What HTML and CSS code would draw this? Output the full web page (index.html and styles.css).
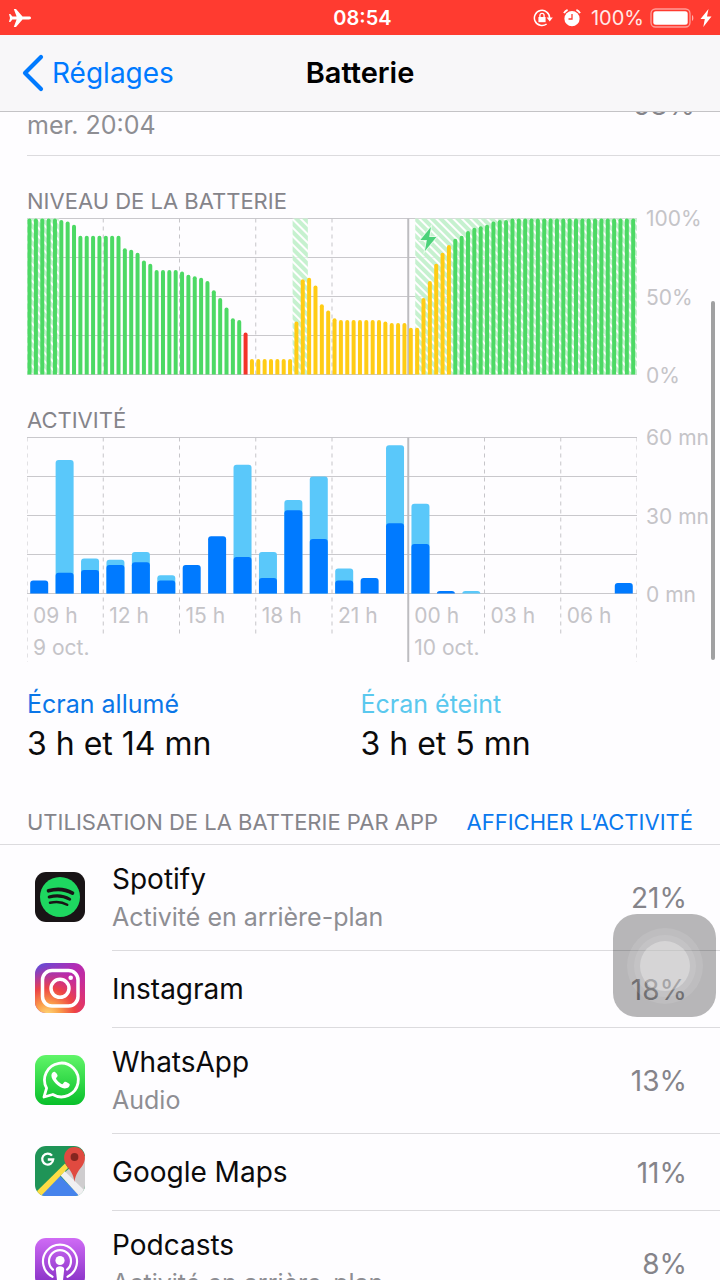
FILE: index.html
```html
<!DOCTYPE html>
<html lang="fr">
<head>
<meta charset="utf-8">
<meta name="viewport" content="width=device-width, initial-scale=1">
<title>Batterie</title>
<link rel="stylesheet" href="styles.css">
</head>
<body>
<div class="screen">
  <div class="status">
    <svg class="plane" width="24" height="20" viewBox="0 0 24 20" aria-label="Mode avion"><path fill="#fff" d="M23 10c0-1-.9-1.400-2-1.400h-6.500L8 1H5.800l2.800 7.600H4.400L2.300 6H1l1 4-1 4h1.300l2.100-2.600h4.200L5.800 19H8l6.500-7.600H21c1.100 0 2-.4 2-1.400z"/></svg>
    <time class="clock">08:54</time>
    <div class="indicators">
      <svg width="20" height="18" viewBox="0 0 20 18" aria-label="Rotation verrouillée"><path d="M13.600 15A7.600 7.600 0 1 1 16.600 9" fill="none" stroke="#fff" stroke-width="1.500"/><path d="M13.600 8.400h6.200l-3.100 4z" fill="#fff"/><path d="M5.400 8h7.200v5.200H5.400z" fill="#fff"/><path d="M6.900 8V6.500a2.100 2.100 0 0 1 4.200 0V8" fill="none" stroke="#fff" stroke-width="1.300"/></svg>
      <svg class="alarm" width="18" height="18" viewBox="0 0 18 18" aria-label="Alarme"><circle cx="9" cy="9.700" r="7.600" fill="#fff"/><path d="M1 4.200A7 7 0 0 1 4.600.9M17 4.200A7 7 0 0 0 13.400.9" stroke="#fff" stroke-width="1.800" fill="none"/><path d="M9 5v5H5.500" fill="none" stroke="#ff3b30" stroke-width="1.300"/></svg>
      <span class="level">100%</span>
      <svg width="44" height="20" viewBox="0 0 44 20" aria-label="Batterie pleine"><rect x="1" y="1" width="39" height="18" rx="4.500" fill="none" stroke="#fff" stroke-opacity=".5" stroke-width="1.300"/><rect x="3.300" y="3.300" width="34.400" height="13.400" rx="2.500" fill="#fff"/><path d="M42 7c1.800.6 1.800 5.400 0 6z" fill="#fff" opacity=".6"/></svg>
      <svg class="bolt" width="12" height="18" viewBox="0 0 12 18" aria-label="En charge"><path d="M8.500 0 .5 10h4.300L3.300 18l8.200-10.600H7z" fill="#fff"/></svg>
    </div>
  </div>

  <header class="nav">
    <a class="back" href="#reglages"><svg width="22" height="38" viewBox="0 0 22 38" aria-hidden="true"><path d="M19 3 3 19l16 16" fill="none" stroke="#007aff" stroke-width="4.200" stroke-linecap="round" stroke-linejoin="round"/></svg>Réglages</a>
    <h1 class="title">Batterie</h1>
  </header>

  <main class="content">
    <div class="last-charge"><span class="when">mer. 20:04</span><span class="pct">68%</span></div>

    <section class="chart">
      <h2 class="heading">NIVEAU DE LA BATTERIE</h2>
      <div class="chart-body">
        <svg class="plot" id="battery" role="img" aria-label="Niveau de la batterie"></svg>
        <div class="scale"><span>100%</span><span>50%</span><span>0%</span></div>
      </div>
    </section>

    <section class="chart">
      <h2 class="heading">ACTIVITÉ</h2>
      <div class="chart-body">
        <svg class="plot plot-tall" id="activity" role="img" aria-label="Activité"></svg>
        <div class="scale"><span>60 mn</span><span>30 mn</span><span>0 mn</span></div>
        <div class="hours">
          <span>09 h</span><span>12 h</span><span>15 h</span><span>18 h</span><span>21 h</span><span>00 h</span><span>03 h</span><span>06 h</span>
          <span class="day">9 oct.</span><span class="day next">10 oct.</span>
        </div>
      </div>
    </section>

    <dl class="totals">
      <div><dt class="on">Écran allumé</dt><dd>3 h et 14 mn</dd></div>
      <div><dt class="off">Écran éteint</dt><dd>3 h et 5 mn</dd></div>
    </dl>

    <section>
      <div class="list-head"><h2 class="heading">UTILISATION DE LA BATTERIE PAR APP</h2><button class="toggle" type="button">AFFICHER L’ACTIVITÉ</button></div>
      <ul class="apps">
        <li class="app">
          <svg class="icon" viewBox="0 0 50 50" aria-hidden="true"><rect width="50" height="50" rx="11" fill="#191416"/><circle cx="25" cy="25" r="20" fill="#1ed760"/><g fill="none" stroke="#191416" stroke-linecap="round"><path d="M13.500 18.800c8-2.300 17-1.600 24 2.300" stroke-width="3.600"/><path d="M14.200 25c7-1.900 14.700-1.100 20.500 2.200" stroke-width="3"/><path d="M15 30.800c6-1.500 12.500-.8 17.200 2" stroke-width="2.500"/></g></svg>
          <div class="info"><div><p class="name">Spotify</p><p class="note">Activité en arrière-plan</p></div><span class="pct">21%</span></div>
        </li>
        <li class="app">
          <svg class="icon" viewBox="0 0 50 50" aria-hidden="true"><defs><linearGradient id="ig1" x1="0" y1="0" x2="1" y2="1"><stop offset="0" stop-color="#5b51d8"/><stop offset=".45" stop-color="#b52ab4"/><stop offset="1" stop-color="#e0306e"/></linearGradient><radialGradient id="ig2" cx=".25" cy="1.050" r="1"><stop offset="0" stop-color="#ffdc7a"/><stop offset=".25" stop-color="#fba04a"/><stop offset=".55" stop-color="#f0453f" stop-opacity=".95"/><stop offset="1" stop-color="#d62a8c" stop-opacity="0"/></radialGradient></defs><rect width="50" height="50" rx="11" fill="url(#ig1)"/><rect width="50" height="50" rx="11" fill="url(#ig2)"/><g fill="none" stroke="#fff" stroke-width="3.500"><rect x="7.500" y="7.500" width="35.500" height="35.500" rx="9.500"/><circle cx="25" cy="25.300" r="9"/></g><circle cx="35.700" cy="14.700" r="2.300" fill="#fff"/></svg>
          <div class="info"><p class="name">Instagram</p><span class="pct">18%</span></div>
        </li>
        <li class="app">
          <svg class="icon" viewBox="0 0 50 50" aria-hidden="true"><defs><linearGradient id="wa" x2="0" y2="1"><stop offset="0" stop-color="#61f569"/><stop offset="1" stop-color="#08bf2a"/></linearGradient></defs><rect width="50" height="50" rx="11" fill="url(#wa)"/><path d="M9 42l2.600-8.900A16.900 16.900 0 1 1 17.800 39.500z" fill="none" stroke="#fff" stroke-width="2.800" stroke-linejoin="round"/><path d="M19.600 16.800c-1-.3-3.300 1.200-3.200 4 .2 4.800 7.600 12.500 13.300 12.700 3 .1 5.400-1.900 5-4.200-.1-.7-4.200-2.700-4.900-2.500-.9.300-1.600 2.400-2.500 2.400-1.400 0-6-3.900-6.300-5.600-.1-.8 1.600-1.900 1.600-2.900 0-.7-1.700-3.600-3-3.900z" fill="#fff"/></svg>
          <div class="info"><div><p class="name">WhatsApp</p><p class="note">Audio</p></div><span class="pct">13%</span></div>
        </li>
        <li class="app">
          <svg class="icon" viewBox="0 0 50 50" aria-hidden="true"><defs><clipPath id="gm"><rect width="50" height="50" rx="11"/></clipPath></defs><g clip-path="url(#gm)"><path fill="#1f9457" d="M0 0h50v50H0z"/><path d="M30 26 50 10v40H44z" fill="#cfcdcf"/><path d="M25 30 4 50h41z" fill="#4683ec"/><path d="M25.500 29.500l4-4.500L52 47l-5 6z" fill="#f1f0f2"/><path d="M0 47 30 17.500l3 4.500L5 51z" fill="#fbdc45"/><path d="M39.500 36c-.8-8-4.800-12-8-16.500C26 11 30.500 1 39.500 1S53 11 47.500 19.500c-3.200 4.500-7.200 8.500-8 16.500z" fill="#e04a40"/><circle cx="39.500" cy="11" r="3.900" fill="#85261f"/></g><path d="M17 9.600a5.500 5.500 0 1 0 1.200 3.900h-5.400" fill="none" stroke="#fff" stroke-width="2.300"/></svg>
          <div class="info"><p class="name">Google Maps</p><span class="pct">11%</span></div>
        </li>
        <li class="app">
          <svg class="icon" viewBox="0 0 50 50" aria-hidden="true"><defs><linearGradient id="po" x2="0" y2="1"><stop offset="0" stop-color="#cf6bf5"/><stop offset="1" stop-color="#822cc2"/></linearGradient></defs><rect width="50" height="50" rx="11" fill="url(#po)"/><g fill="none" stroke="#fff" stroke-width="2.200" stroke-linecap="round"><path d="M17.500 38.800a17 17 0 1 1 15 0"/><path d="M18 31.600a11 11 0 1 1 14 0"/></g><circle cx="25" cy="22.500" r="4.600" fill="#fff"/><path d="M20.800 31c.3-3.600 8.100-3.600 8.400 0l-1.200 11.500c-.5 2.600-5.500 2.600-6 0z" fill="#fff"/></svg>
          <div class="info"><div><p class="name">Podcasts</p><p class="note">Activité en arrière-plan</p></div><span class="pct">8%</span></div>
        </li>
      </ul>
    </section>
  </main>

  <div class="scroll-thumb"></div>
  <button class="assistive" type="button" aria-label="AssistiveTouch"><span class="ring"><span class="ring"><span class="dot"></span></span></span></button>
</div>
<script src="charts.js"></script>
</body>
</html>
```
FILE: styles.css
```css
* { box-sizing: border-box; }
body {
  margin: 0;
  font-family: Inter, "Noto Sans", sans-serif;
  font-size: 28px;
  color: #0b0b0c;
  background: #fefdff;
}
h1, h2, p, ul, dl, dd { margin: 0; padding: 0; font-weight: 400; }
svg { display: block; flex: none; }
button { border: 0; padding: 0; background: none; font: inherit; }

.screen {
  position: relative;
  display: flex;
  flex-direction: column;
  height: 100vh;
  overflow: hidden;
}

.status {
  display: grid;
  grid-template-columns: 1fr auto 1fr;
  align-items: center;
  height: 35px;
  flex: none;
  padding: 0 8px;
  background: #ff3b30;
  color: #fff;
  font-size: 20px;
}
.clock { font-weight: 600; padding-left: 5px; }
.indicators { display: flex; align-items: center; justify-content: flex-end; gap: 6px; }
.alarm { margin: 0 4px; }
.level { color: #ffe9e7; }

.nav {
  display: grid;
  grid-template-columns: 1fr auto 1fr;
  align-items: center;
  height: 77px;
  flex: none;
  padding: 0 22px;
  background: #f8f7f9;
  border-bottom: 1px solid #c4c3c6;
}
.back { display: flex; align-items: center; gap: 8px; color: #007aff; text-decoration: none; }
.title { font-size: 29px; font-weight: 600; line-height: 34px; color: #000; }

.content { flex: 1; min-height: 0; overflow: hidden; }

.last-charge {
  display: flex;
  justify-content: space-between;
  align-items: flex-start;
  height: 44px;
  margin-left: 27px;
  padding-right: 25px;
  border-bottom: 1px solid #dcdbde;
  color: #8e8e93;
  line-height: 32px;
}
.when { font-size: 25px; margin-top: -3px; }
.last-charge .pct { margin-top: -23px; }

.heading { font-size: 22px; line-height: 28px; color: #85848a; }

.chart { padding: 31px 0 0 27px; }
.chart-body { display: grid; grid-template-columns: 1fr 83px; margin-top: 3px; }
.plot { width: 100%; height: 157px; grid-area: 1 / 1; }
.plot-tall { height: 225px; }
.scale {
  grid-area: 1 / 2;
  display: flex;
  flex-direction: column;
  justify-content: space-between;
  height: 183px;
  margin: -12px 0 -14px;
  padding-left: 9px;
  font-size: 21px;
  line-height: 26px;
  color: #c5c4c8;
  white-space: nowrap;
}
.hours {
  grid-area: 1 / 1;
  display: grid;
  grid-template-columns: repeat(8, 1fr);
  align-content: start;
  margin-bottom: -2px;
  padding-top: 163px;
  font-size: 21px;
  line-height: 32px;
  color: #c5c4c8;
}
.hours span { padding-left: 6px; white-space: nowrap; }
.hours .day { grid-column: 1 / span 5; }
.hours .next { grid-column: 6 / span 3; }

.gridline { stroke: #c9c8cc; stroke-width: 1; }
.dash { stroke: #c6c5c9; stroke-width: 1; stroke-dasharray: 4 4; }
.midnight { stroke: #bdbcc0; stroke-width: 2; }
.high { fill: #4cd964; }
.low { fill: #ffcc14; }
.critical { fill: #f33328; }
.screen-on { fill: #007aff; }
.screen-off { fill: #5ac8fa; }

.totals { display: grid; grid-template-columns: 1fr 1fr; padding: 25px 26px 0 27px; }
.totals dt { font-size: 25px; line-height: 34px; }
.totals dd { font-size: 32px; line-height: 46px; }
.on { color: #0a76e8; }
.off { color: #5ac8ee; }

.list-head {
  display: flex;
  justify-content: space-between;
  align-items: center;
  padding: 41px 27px 8px;
  border-bottom: 1px solid #dcdbde;
}
.toggle { font-size: 22px; line-height: 28px; color: #0a78ee; white-space: nowrap; }

.apps { list-style: none; }
.app { display: flex; align-items: center; gap: 27px; padding-left: 35px; }
.icon { width: 50px; height: 50px; margin-bottom: 3px; }
.info {
  flex: 1;
  display: flex;
  align-items: center;
  justify-content: space-between;
  min-height: 77px;
  padding: 15px 33px 14px 0;
  border-bottom: 1px solid #dcdbde;
}
.name { line-height: 39px; }
.note { font-size: 25px; line-height: 37px; color: #8e8e93; }
.pct { color: #85848a; }

.scroll-thumb {
  position: absolute;
  top: 301px;
  right: 5px;
  width: 4px;
  height: 359px;
  border-radius: 2px;
  background: #a0a0a2;
}
.assistive {
  position: absolute;
  top: 914px;
  right: 4px;
  display: grid;
  place-items: center;
  width: 103px;
  height: 103px;
  border-radius: 24px;
  background: rgba(0, 0, 0, .28);
}
.ring {
  display: grid;
  place-items: center;
  width: 76px;
  height: 76px;
  border-radius: 50%;
  background: rgba(255, 255, 255, .1);
}
.ring .ring { width: 62px; height: 62px; }
.dot { width: 50px; height: 50px; border-radius: 50%; background: rgba(255, 255, 255, .3); }
```
FILE: charts.js
```js
// Both charts cover 24 hours and share a 156px high plot area.
const NS = 'http://www.w3.org/2000/svg';
const TOP = 0.5;
const HEIGHT = 156;
const BASE = TOP + HEIGHT;

function add(parent, tag, attrs) {
  const el = document.createElementNS(NS, tag);
  for (const key in attrs) el.setAttribute(key, attrs[key]);
  parent.appendChild(el);
  return el;
}

function grid(svg, shortEnd, longEnd) {
  for (let i = 0; i < 5; i++) {
    const y = TOP + i * HEIGHT / 4;
    add(svg, 'line', { class: 'gridline', x1: 0, x2: '100%', y1: y, y2: y });
  }
  for (let i = 0; i <= 8; i++) {
    const x = i * 12.5 + '%';
    const edge = i === 0 || i === 5 || i === 8;
    add(svg, 'line', { class: i === 5 ? 'midnight' : 'dash', x1: x, x2: x, y1: TOP, y2: edge ? longEnd : shortEnd });
  }
}

// A bar with rounded top corners; the bottom corners fall below the clip.
function bar(parent, cls, centre, width, radius, height) {
  add(parent, 'rect', {
    class: cls, x: centre + '%', y: BASE - height, width, height: height + radius,
    rx: radius, transform: `translate(${-width / 2} 0)`
  });
}

function clipped(svg, id) {
  const clip = add(svg, 'clipPath', { id });
  add(clip, 'rect', { x: 0, y: 0, width: '100%', height: BASE });
  return add(svg, 'g', { 'clip-path': `url(#${id})` });
}

const levels = [
  100, 100, 100, 100, 100, 99, 98, 96, 89, 89, 89, 89, 89, 89, 89, 81, 80, 78, 73, 71, 67, 67, 67, 67,
  66, 64, 63, 62, 60, 54, 49, 43, 36, 35, 27, 10, 10, 10, 10, 10, 10, 10, 34, 61, 62, 57, 45, 41,
  36, 35, 35, 35, 35, 35, 35, 35, 34, 33, 33, 33, 30, 30, 49, 60, 71, 78, 83, 87, 89, 92, 94, 95,
  96, 98, 99, 99, 100, 100, 100, 100, 100, 100, 100, 100, 100, 100, 100, 100, 100, 100, 100, 100, 100, 100, 100, 100
];
const charging = [[0, 5], [41.8, 44.2], [61.1, 96]];

const battery = document.getElementById('battery');
const hatch = add(battery, 'pattern', {
  id: 'hatch', width: 6, height: 6, patternUnits: 'userSpaceOnUse', patternTransform: 'rotate(45)'
});
add(hatch, 'rect', { width: 6, height: 4, fill: '#c0f0ca' });
grid(battery, BASE, BASE);
charging.forEach(([from, to]) => {
  const box = { x: from / .96 + '%', y: TOP, width: (to - from) / .96 + '%', height: HEIGHT };
  add(battery, 'rect', { ...box, fill: '#fff', opacity: .6 });
  add(battery, 'rect', { ...box, fill: 'url(#hatch)', opacity: .9 });
});
const levelBars = clipped(battery, 'level-clip');
levels.forEach((level, i) => {
  const cls = i === 34 ? 'critical' : i > 34 && i < 67 ? 'low' : 'high';
  bar(levelBars, cls, (i + .4) / .96, 4, 2, level * HEIGHT / 100);
});
const bolt = add(battery, 'svg', { x: '64%', y: 8, width: 22, height: 26, viewBox: '-3 -1 22 26', overflow: 'visible' });
add(bolt, 'path', {
  d: 'M10.500 0 0 13h6.500L4.500 24 16 10H8.800z',
  fill: '#4cd27a', stroke: '#e6fbe9', 'stroke-width': 2, 'paint-order': 'stroke'
});

// Minutes per hour: [screen on, total].
const activity = [
  [5, 5], [8, 51.3], [9, 13.5], [11, 13], [12, 16], [5, 7], [11, 11], [22, 22], [14, 49.5], [6, 16],
  [32, 36], [21, 45], [5, 9.6], [6, 6], [27, 57], [19, 34.5], [1, 1], [0, 1], [0, 0], [0, 0],
  [0, 0], [0, 0], [0, 0], [4, 4]
];
const chart = document.getElementById('activity');
grid(chart, 197, 225);
const activityBars = clipped(chart, 'activity-clip');
activity.forEach(([on, total], i) => {
  const centre = (i + .48) / .24;
  if (total > on) bar(activityBars, 'screen-off', centre, 18, 3, total * HEIGHT / 60);
  if (on) bar(activityBars, 'screen-on', centre, 18, 3, on * HEIGHT / 60);
});
```
